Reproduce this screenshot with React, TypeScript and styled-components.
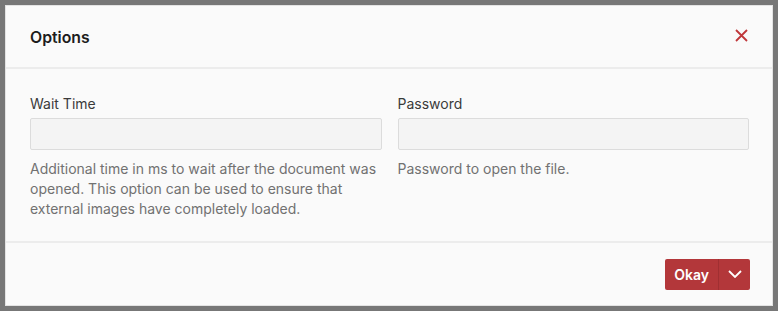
import React from "react";
import styled, { createGlobalStyle } from "styled-components";

const Global = createGlobalStyle`
  html, body { margin: 0; padding: 0; }
  body {
    background: #777777;
    font-family: Inter, "Noto Sans", sans-serif;
    width: 778px;
    height: 311px;
    overflow: hidden;
  }
`;

const Page = styled.div`
  padding: 5px 5px 0 5px;
`;

const Dialog = styled.div`
  box-sizing: border-box;
  width: 768px;
  height: 301px;
  background: #fafafa;
  border: 1px solid #e3e3e3;
  display: flex;
  flex-direction: column;
`;

const Header = styled.div`
  height: 63px;
  display: flex;
  align-items: center;
  justify-content: space-between;
  padding: 2px 23px 0 24px;
  box-sizing: border-box;
  border-bottom: 2px solid #ececec;
`;

const Title = styled.h2`
  margin: 0;
  font-size: 15.8px;
  font-weight: 600;
  color: #1c1c1c;
`;

const CloseButton = styled.button`
  border: 0;
  background: transparent;
  padding: 0;
  margin-bottom: 4px;
  width: 16px;
  height: 16px;
  display: flex;
  align-items: center;
  justify-content: center;
  color: #c0373a;
  cursor: pointer;
`;

const Body = styled.div`
  flex: 1;
  display: grid;
  grid-template-columns: 1fr 1fr;
  column-gap: 16px;
  padding: 26px 23px 0 24px;
  border-bottom: 2px solid #ececec;
`;

const Field = styled.div`
  display: flex;
  flex-direction: column;
`;

const Label = styled.label`
  font-size: 14px;
  color: #3a3a3a;
  line-height: 17px;
  margin-bottom: 6px;
`;

const Input = styled.input`
  box-sizing: border-box;
  height: 32px;
  width: 100%;
  background: #f4f4f4;
  border: 1px solid #dcdcdc;
  border-radius: 2px;
  outline: none;
  font-family: inherit;
`;

const Help = styled.p`
  margin: 9px 0 0 0;
  font-size: 14px;
  line-height: 20px;
  color: #717171;
`;

const Footer = styled.div`
  height: 62px;
  display: flex;
  align-items: center;
  justify-content: flex-end;
  padding: 0 22px 0 24px;
`;

const SplitButton = styled.div`
  display: flex;
  height: 31px;
  background: #b3373a;
  border-radius: 2px;
  overflow: hidden;
`;

const MainPart = styled.button`
  border: 0;
  background: transparent;
  color: #ffffff;
  font-family: inherit;
  font-size: 14px;
  font-weight: 600;
  padding: 0 9px 0 9px;
  border-right: 1px solid #a02f32;
  cursor: pointer;
`;

const ArrowPart = styled.button`
  border: 0;
  background: transparent;
  color: #ffffff;
  width: 31px;
  display: flex;
  align-items: center;
  justify-content: center;
  padding: 0;
  cursor: pointer;
`;

export default function App() {
  return (
    <>
      <Global />
      <Page>
        <Dialog>
          <Header>
            <Title>Options</Title>
            <CloseButton aria-label="Close">
              <svg width="13" height="13" viewBox="0 0 13 13">
                <path d="M1 1 L12 12 M12 1 L1 12" stroke="currentColor" strokeWidth="1.8" fill="none" />
              </svg>
            </CloseButton>
          </Header>
          <Body>
            <Field>
              <Label>Wait Time</Label>
              <Input type="text" />
              <Help>
                Additional time in ms to wait after the document was opened. This option can be used to ensure that
                external images have completely loaded.
              </Help>
            </Field>
            <Field>
              <Label>Password</Label>
              <Input type="password" />
              <Help>Password to open the file.</Help>
            </Field>
          </Body>
          <Footer>
            <SplitButton>
              <MainPart>Okay</MainPart>
              <ArrowPart aria-label="More">
                <svg width="14" height="8" viewBox="0 0 14 8">
                  <path d="M1 1 L7 7 L13 1" stroke="currentColor" strokeWidth="1.8" fill="none" />
                </svg>
              </ArrowPart>
            </SplitButton>
          </Footer>
        </Dialog>
      </Page>
    </>
  );
}
